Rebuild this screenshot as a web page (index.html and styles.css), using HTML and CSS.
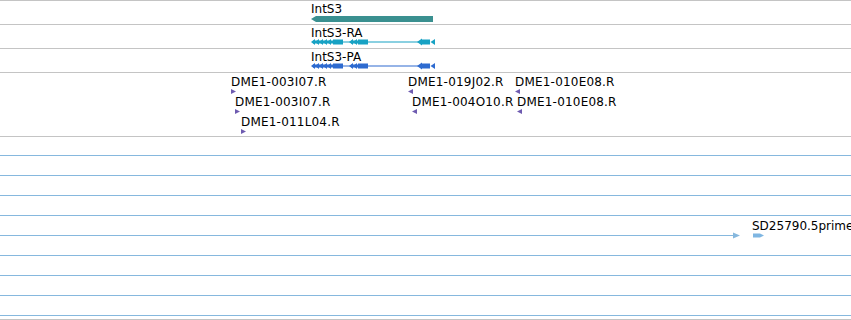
FILE: index.html
```html
<!DOCTYPE html>
<html>
<head>
<meta charset="utf-8">
<link rel="stylesheet" href="styles.css">
</head>
<body>
<div class="browser">
  <div class="track t-gene">
    <span class="label" style="left:311px;top:1px">IntS3</span>
    <svg class="glyph" style="left:308px;top:14px" width="130" height="8" viewBox="0 0 130 8">
      <polygon class="teal" points="3,4 8,1 125,1 125,7 8,7"/>
    </svg>
  </div>
  <div class="track t-gene">
    <span class="label" style="left:311px;top:1px">IntS3-RA</span>
    <svg class="glyph cyan" style="left:308px;top:12px" width="130" height="10" viewBox="0 0 130 10">
      <rect x="25" y="4.5" width="95" height="1"/>
      <rect x="5" y="3.5" width="20" height="3"/>
      <polygon points="3,5 7,2 7,8"/><polygon points="7,5 11,2 11,8"/><polygon points="11,5 15,2 15,8"/><polygon points="15,5 19,2 19,8"/><polygon points="19,5 23,2 23,8"/>
      <rect x="25" y="2.5" width="10" height="5"/>
      <rect x="43" y="3.5" width="8" height="3"/>
      <polygon points="41,5 45,2 45,8"/><polygon points="45,5 49,2 49,8"/>
      <rect x="50" y="2.5" width="10" height="5"/>
      <polygon points="109,5 114,1.5 114,2.5 122,2.5 122,7.5 114,7.5 114,8.5"/>
      <polygon points="122.5,5 127,2 127,8"/>
    </svg>
  </div>
  <div class="track t-gene">
    <span class="label" style="left:311px;top:1px">IntS3-PA</span>
    <svg class="glyph blue" style="left:308px;top:12px" width="130" height="10" viewBox="0 0 130 10">
      <rect x="25" y="4.5" width="95" height="1"/>
      <rect x="5" y="3.5" width="20" height="3"/>
      <polygon points="3,5 7,2 7,8"/><polygon points="7,5 11,2 11,8"/><polygon points="11,5 15,2 15,8"/><polygon points="15,5 19,2 19,8"/><polygon points="19,5 23,2 23,8"/>
      <rect x="25" y="2.5" width="10" height="5"/>
      <rect x="43" y="3.5" width="8" height="3"/>
      <polygon points="41,5 45,2 45,8"/><polygon points="45,5 49,2 49,8"/>
      <rect x="50" y="2.5" width="10" height="5"/>
      <polygon points="109,5 114,1.5 114,2.5 122,2.5 122,7.5 114,7.5 114,8.5"/>
      <polygon points="122.5,5 127,2 127,8"/>
    </svg>
  </div>
  <div class="track t-ends">
    <span class="label est" style="left:231px;top:2px">DME1-003I07.R</span>
    <svg class="tri" style="left:231px;top:16px" width="5" height="5"><polygon points="0,0 5,2.5 0,5"/></svg>
    <span class="label est" style="left:235px;top:22px">DME1-003I07.R</span>
    <svg class="tri" style="left:235px;top:36px" width="5" height="5"><polygon points="0,0 5,2.5 0,5"/></svg>
    <span class="label est" style="left:241px;top:42px">DME1-011L04.R</span>
    <svg class="tri" style="left:241px;top:56px" width="5" height="5"><polygon points="0,0 5,2.5 0,5"/></svg>

    <span class="label est" style="left:408px;top:2px">DME1-019J02.R</span>
    <svg class="tri" style="left:408px;top:16px" width="5" height="5"><polygon points="5,0 0,2.5 5,5"/></svg>
    <span class="label est" style="left:515px;top:2px">DME1-010E08.R</span>
    <svg class="tri" style="left:515px;top:16px" width="5" height="5"><polygon points="5,0 0,2.5 5,5"/></svg>
    <span class="label est" style="left:412px;top:22px">DME1-004O10.R</span>
    <svg class="tri" style="left:412px;top:36px" width="5" height="5"><polygon points="5,0 0,2.5 5,5"/></svg>
    <span class="label est" style="left:517px;top:22px">DME1-010E08.R</span>
    <svg class="tri" style="left:517px;top:36px" width="5" height="5"><polygon points="5,0 0,2.5 5,5"/></svg>
  </div>
  <div class="track t-reads">
    <div class="rows">
      <div class="row"><div class="read"></div></div>
      <div class="row"><div class="read"></div></div>
      <div class="row"><div class="read"></div></div>
      <div class="row"><div class="read"></div></div>
      <div class="row">
        <svg class="row-svg" width="851" height="20" viewBox="0 0 851 20">
          <rect class="readfill" x="0" y="10" width="735" height="1"/>
          <polygon class="readfill" points="733,7.5 740,10.5 733,13.5"/>
          <polygon class="prime" points="753,8.5 760,8.5 764,10.5 760,12.5 753,12.5"/>
        </svg>
      </div>
      <div class="row"><div class="read"></div></div>
      <div class="row"><div class="read"></div></div>
      <div class="row"><div class="read"></div></div>
      <div class="row"><div class="read"></div></div>
    </div>
    <span class="label" style="left:752px;top:82px">SD25790.5prime</span>
  </div>
  <div class="track t-last"></div>
</div>
</body>
</html>
```
FILE: styles.css
```css
html, body {
  margin: 0;
  padding: 0;
  background: #ffffff;
}
.browser {
  width: 851px;
  height: 320px;
  overflow: hidden;
  font-family: "DejaVu Sans", sans-serif;
  font-size: 12px;
  line-height: 14px;
  color: #000;
}
.track {
  position: relative;
  box-sizing: border-box;
  border-top: 1px solid #c4c4c4;
  overflow: hidden;
}
.t-gene { height: 24px; }
.t-ends { height: 64px; }
.t-reads { height: 183px; }
.t-last { height: 1px; }
.label {
  position: absolute;
  white-space: nowrap;
}
.est { letter-spacing: 0.2px; }
.glyph, .tri, .row-svg {
  position: absolute;
  display: block;
}
.teal { fill: #3a9090; }
.cyan { fill: #17a2c4; }
.blue { fill: #2e6bd0; }
.tri { fill: #6e5bb0; }
.rows {
  padding-top: 8px;
  display: grid;
  grid-auto-rows: 20px;
}
.row {
  position: relative;
}
.read {
  margin-top: 10px;
  height: 1px;
  background: #86b8de;
}
.row-svg { left: 0; top: 0; }
.readfill { fill: #86b8de; }
.prime { fill: #7fb6e2; }
```
